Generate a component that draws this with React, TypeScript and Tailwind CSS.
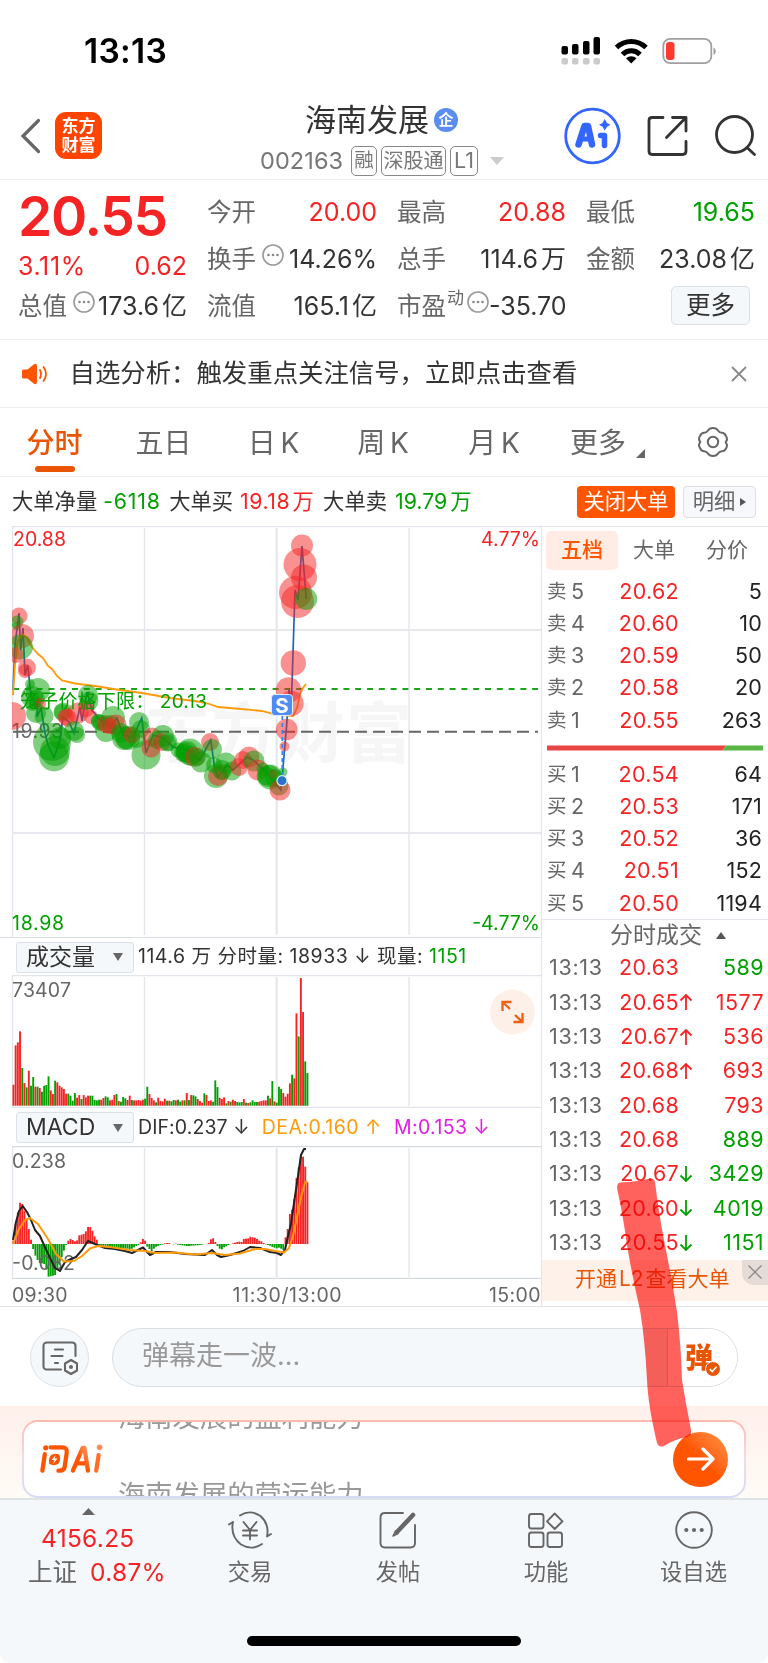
import type { ReactNode } from 'react'

const RED = '#f52323'
const GREEN = '#00a000'

const tabs = [
  { label: '五日', width: 'w-[109px]' },
  { label: '日 K', width: 'w-[111px]' },
  { label: '周 K', width: 'w-[108px]' },
  { label: '月 K', width: 'w-[114px]' },
]

const asks = [['卖', '5', '20.62', '5'], ['卖', '4', '20.60', '10'], ['卖', '3', '20.59', '50'], ['卖', '2', '20.58', '20'], ['卖', '1', '20.55', '263']]
const bids = [['买', '1', '20.54', '64'], ['买', '2', '20.53', '171'], ['买', '3', '20.52', '36'], ['买', '4', '20.51', '152'], ['买', '5', '20.50', '1194']]

const ticks = [
  { price: '20.63', dir: '', vol: '589', up: false },
  { price: '20.65', dir: '↑', vol: '1577', up: true },
  { price: '20.67', dir: '↑', vol: '536', up: true },
  { price: '20.68', dir: '↑', vol: '693', up: true },
  { price: '20.68', dir: '', vol: '793', up: true },
  { price: '20.68', dir: '', vol: '889', up: false },
  { price: '20.67', dir: '↓', vol: '3429', up: false },
  { price: '20.60', dir: '↓', vol: '4019', up: false },
  { price: '20.55', dir: '↓', vol: '1151', up: false },
]

// x, y, radius, side
const bubbles: [number, number, number, 'r' | 'g'][] = [
  [16, 626, 4, 'g'], [19, 616, 8.5, 'r'], [17, 622, 6.5, 'g'], [22, 636, 12, 'r'], [20.5, 647, 12.5, 'g'], [16, 655, 8, 'r'],
  [12, 716, 14, 'r'], [27, 667.5, 9, 'r'], [25, 671, 7, 'r'], [30, 684, 5, 'g'], [38, 690, 12, 'g'], [32, 697, 11, 'g'],
  [36, 699, 9, 'g'], [33, 703, 8, 'g'], [40, 704, 6, 'r'], [36, 713, 10, 'g'], [44, 716, 9.5, 'g'], [52, 742, 19, 'g'], [54, 756.5, 15, 'g'],
  [55, 751, 15, 'g'], [60, 738, 11, 'g'], [63, 712, 9.5, 'g'], [62, 712, 8, 'g'], [66, 717, 8.5, 'r'], [68, 718, 9, 'r'], [78, 713, 10.5, 'r'],
  [74, 731, 10, 'g'], [77, 735, 8, 'g'], [88, 695, 10, 'g'], [89, 701, 9.5, 'g'], [86, 709, 8, 'r'], [91, 717, 7, 'r'],
  [98, 721, 7, 'g'], [99, 722, 8, 'g'], [101, 723, 8, 'g'], [106, 731, 11, 'g'], [106, 724, 9, 'r'], [113, 718, 12, 'g'], [111, 724, 9, 'g'],
  [116, 725, 10.5, 'r'], [109, 726, 8, 'r'], [121, 733, 10, 'g'], [124, 738, 12, 'g'], [126, 738, 11, 'g'], [128, 738, 12, 'g'], [132, 735, 8.5, 'r'],
  [139, 722, 10, 'g'], [141, 729, 9, 'g'], [137, 739, 9, 'g'], [146, 755, 14.5, 'g'], [151, 748, 9.5, 'r'], [152, 737, 9.5, 'r'],
  [157, 740, 9, 'g'], [163, 736, 11, 'g'], [162, 742, 9, 'r'], [168, 742, 9.5, 'g'], [168, 743, 8, 'g'], [178, 750, 7.5, 'g'], [183, 753, 9, 'g'],
  [185, 752, 9.5, 'g'], [187, 752, 11, 'g'], [190, 752, 13.5, 'g'], [191, 756, 10, 'g'], [195, 757, 10, 'r'], [197, 757, 9, 'g'], [201, 762, 10.5, 'g'], [210, 742, 9, 'r'],
  [212, 749, 10, 'g'], [216, 776, 12, 'g'], [218, 776, 10, 'r'], [222, 772, 8, 'r'], [214, 765, 8, 'g'], [226, 763, 10.5, 'g'], [222, 770, 10, 'g'],
  [232, 771, 9.5, 'g'], [239, 767, 9, 'r'], [243, 760, 9, 'r'], [249, 757, 10.5, 'r'], [254, 761, 10.5, 'g'], [258, 770, 10.5, 'r'],
  [263, 769, 6.5, 'g'], [266, 776, 9.5, 'g'], [269, 776, 11, 'g'], [270, 777, 12.5, 'g'], [273, 774, 4.5, 'r'], [274, 778, 9, 'g'], [279, 786, 9.5, 'g'],
  [280, 790, 10.5, 'r'], [283, 772, 4.5, 'g'], [284.5, 746.5, 5, 'r'], [286.7, 729.5, 10.8, 'r'], [288.5, 690, 12.7, 'r'],
  [291, 703.5, 12.7, 'r'], [293.3, 663, 12.7, 'r'], [295.5, 592.5, 16.5, 'r'], [297.5, 601.5, 16.5, 'r'], [300, 564.5, 16.5, 'r'],
  [304, 577.5, 13, 'r'], [302, 545.5, 11, 'r'], [306.3, 599, 11, 'g'],
]

const pricePath =
  'M13 690L15 645L19 613L20.7 650L23 628L25 675L27.7 665L30.7 693L35 707L38 697L37 717L41 708L45 733L48 745L54 758L60 740L63 717L69 722L74 733L80 707L82 721L87 692L92 710L100 720L110 727L117 718L123 735L133 737L141.7 718L146 753L153 735L163 738L173 747L187 750L200 760L210.7 740L215 770L218 777L227 765L233 770L247 757L253 760L267 773L280.7 790L282 779L286.5 727L289 690L291.5 700L295 590L298 600L302 546L306.3 599'

const avgPath =
  'M13 695L15 665L17.500 642L22 634L27 638L32 647L38 654L43 658L48 666L52 669L57 676L62 680.500L75 683.500L95 686L120 690L142 693L170 698L195 701L208 703.500L218 707L235 708.500L262 711L272 713.500L282 715L293 716L297 708L300 694L303 688L306 684'

// side + height, one entry per minute
const volume =
  'r63 r181 r190 r223 g113 r68 g55 r105 g60 g86 r57 g57 r53 g42 g60 g62 g88 r46 r35 g75 r70 r60 r55 r50 r36 g36 g30 g15 g38 r24 r32 g20 r32 r25 r30 g30 g30 g17 g16 g18 r18 r23 g28 g25 r16 r18 r32 g35 r14 g12 g26 g22 r17 r30 g17 r16 r16 r17 r15 r18 g21 g57 r35 r23 r16 g10 r24 r14 r13 r21 g15 r15 g13 g17 r16 g18 g12 r16 g16 r38 g17 r32 g31 g28 r20 r14 r9 g37 r32 r14 r16 g12 g76 g56 r24 r20 r25 g7 r14 g12 r18 r14 g11 g10 g11 r20 g9 r8 g10 g16 g11 g11 r12 r14 r16 r16 g30 r22 g74 r13 g9 g57 g50 r38 r27 r36 r67 g93 r82 r277 g208 r383 r281 g133 g98'.split(' ')

const macd = [
  10, 60, 95, 124, 120, 100, 75, 45, 13, -15, -35, -48, -57, -58, -60, -75, -98, -97, -95, -93, -75, -62, -40, -20, -3,
  10, 15, 12, 8, 11, 26, 28, 30, 38, 51, 51, 40, 23, 13, -2, -4, -6, -5, -8, -10, -9, -10, -12, -12, -13, -12, -14, -14, -15, -14, -10, -6, -3,
  5, 15, 10, -8, -15, -22, -14, -8, -6, -3, -2, 2, 3, 3, 0, -1, 1, -2, -3, -4, -5, -6, -6, -5, -5, -4, -4, -3, -2, 0, 0, 3,
  14, 17, 6, -6, -14, -16, -10, -7, -3, 0, 2, 4, 6, 7, 6, 15, 16, 17, 22, 20, 19, 15, 10, 8, 3, -1, -3, -5, -9, -11, -13, -11, -14, -18,
  20, 45, 90, 103, 135, 198, 230, 262, 262, 232, 185,
]

const difPath =
  'M13 1240L16 1222L19 1211L22.700 1206L27 1212L31 1220L35 1230L40 1236L44 1245L50 1258L55 1268L60 1271L65 1262L71 1259L76 1257L82 1250L88 1241L95 1244L105 1248L115 1249L125 1251L132 1253L138 1250L143 1247.500L147 1252L150 1255L156 1252L170 1252L185 1254L205 1255L212 1250L217 1255L221 1257L230 1255L243 1251L250 1247L260 1248L270 1252L277 1253L281 1255L285 1250L288 1236L291 1224L294 1203L298 1176L301 1155L304 1149L306 1149'

const deaPath =
  'M13 1244L19 1229L25 1220L30 1218L38 1224L48 1239L56 1254L64 1261.500L74 1261L82 1256L90 1248.500L98 1246L110 1247L130 1250L145 1251L155 1253L175 1252.500L195 1254.500L212 1253L225 1255L240 1253.500L255 1249L265 1249L275 1251L284 1252.500L289 1248L293 1236L297 1217L301 1197L305 1183L307 1181'

function Dots({ className }: { className: string }) {
  return (
    <svg viewBox="0 0 22 22" className={`w-[22px] h-[22px] shrink-0 ${className}`}>
      <circle cx="11" cy="11" r="10" fill="none" stroke="#999" strokeWidth="1.600" />
      <circle cx="6.500" cy="11" r="1.300" fill="#888" />
      <circle cx="11" cy="11" r="1.300" fill="#888" />
      <circle cx="15.500" cy="11" r="1.300" fill="#888" />
    </svg>
  )
}

function Cell({ label, extra, value, color = 'text-[#333]' }: { label: string; extra?: ReactNode; value: string; color?: string }) {
  return (
    <div className="flex items-center h-[47px] whitespace-nowrap">
      <span className="text-[24.5px] text-[#666]">{label}</span>
      {extra}
      <span className={`ml-auto text-[25px] [word-spacing:-4px] ${color}`}>{value}</span>
    </div>
  )
}

function Grid({ top, bottom }: { top: number; bottom: number }) {
  return (
    <g stroke="#e2e5ec" strokeWidth="1.300">
      <path d={`M12.500 ${top}V${bottom}M144.500 ${top + 2}V${bottom - 2}M409 ${top + 2}V${bottom - 2}`} />
      <path d={`M276.700 ${top + 2}V${bottom - 2}`} strokeWidth="2" />
    </g>
  )
}

function StatusBar() {
  return (
    <div className="h-[94px] flex pl-[84px] relative">
      <span className="text-[33.5px] font-semibold tracking-[0.3px] leading-[102px] text-black">13:13</span>
      <svg viewBox="556 30 166 40" className="w-[166px] h-[40px] ml-auto mt-[30px] mr-[46px]">
        <g fill="#000">
          <rect x="561.500" y="46" width="6.500" height="8.500" rx="2" />
          <rect x="572" y="44" width="6.500" height="10.500" rx="2" />
          <rect x="583" y="41" width="6.500" height="13.500" rx="2" />
          <rect x="593.500" y="37" width="6.500" height="17.500" rx="2" />
        </g>
        <g fill="#cacaca">
          <rect x="561.500" y="58" width="6.500" height="6.500" rx="2" />
          <rect x="572" y="58" width="6.500" height="6.500" rx="2" />
          <rect x="583" y="58" width="6.500" height="6.500" rx="2" />
          <rect x="593.500" y="58" width="6.500" height="6.500" rx="2" />
        </g>
        <g fill="none" stroke="#000" strokeWidth="5">
          <path d="M616.500 47.500C625 39.500 637.500 39.500 646 47.500" />
          <path d="M622.500 54.500C627.500 49.500 635 49.500 640 54.500" />
        </g>
        <path d="M626 58.200C629 55.500 633.500 55.500 636.500 58.200L631.200 63.500Z" fill="#000" />
        <rect x="663.300" y="38.800" width="48" height="24.400" rx="7" fill="none" stroke="#a0a0a0" strokeWidth="1.800" />
        <path d="M713.500 47.500C716.500 49 716.500 53.500 713.500 55Z" fill="#a0a0a0" />
        <rect x="666" y="42" width="8.500" height="18" rx="3" fill="#ff3b30" />
      </svg>
    </div>
  )
}

function Header() {
  return (
    <div className="h-[86px] flex border-b border-[#eee]">
      <svg viewBox="0 0 24 40" className="w-[24px] h-[40px] ml-[19px] mt-[22px]">
        <path d="M19.500 4.500L4 20L19.500 35.500" fill="none" stroke="#666" strokeWidth="3.200" strokeLinecap="round" />
      </svg>
      <div className="w-[47px] h-[47px] ml-[12px] mt-[18px] rounded-[11px] bg-[#ff4400] text-white font-bold text-[17px] leading-[19px] text-center pt-[5px]">
        东方<br />财富
      </div>
      <div className="w-[250px] ml-[157px] flex flex-col">
        <div className="flex items-center h-[38px] mt-[7px] ml-[46px] text-[31px] text-[#333]">
          海南发展
          <span className="w-[24px] h-[24px] ml-[5px] rounded-full bg-[#5b8def] text-white text-[15px] font-bold flex items-center justify-center">企</span>
        </div>
        <div className="flex items-center h-[30px] mt-[7px] text-[23.5px] text-[#777] leading-none whitespace-nowrap">
          <span className="w-[92px] pl-[1px] tracking-[0.1px]">002163</span>
          <span className="w-[26px] h-[30px] border-[1.500px] border-[#888] rounded-[5px] text-[19.5px] flex items-center justify-center">融</span>
          <span className="w-[65px] h-[30px] ml-[4px] border-[1.500px] border-[#888] rounded-[5px] text-[20px] flex items-center justify-center">深股通</span>
          <span className="w-[28px] h-[30px] ml-[4px] border-[1.500px] border-[#888] rounded-[5px] text-[21.5px] flex items-center justify-center">L1</span>
          <svg viewBox="0 0 14 8" className="w-[14px] h-[8px] ml-[12px]"><path d="M0 0H14L7 8Z" fill="#ccc" /></svg>
        </div>
      </div>
      <svg viewBox="560 104 208 64" className="w-[208px] h-[64px] ml-auto mt-[10px]">
        <circle cx="592.500" cy="136" r="26.800" fill="none" stroke="#3366ff" strokeWidth="2.800" />
        <g stroke="#3366ff" strokeWidth="6.500" strokeLinecap="round" strokeLinejoin="round" fill="none">
          <path d="M578.500 144.500L584.500 126H588L592 144.500" />
          <path d="M582 139H590" strokeWidth="5" />
          <path d="M600.500 135.500H604.500V145.500" strokeWidth="5.500" />
        </g>
        <path d="M604.700 119L607 123L610.500 124.700L607 126.700L604.700 130.500L602.600 126.700L599 124.700L602.600 123Z" fill="#3366ff" />
        <g fill="none" stroke="#333" strokeWidth="2.800" strokeLinecap="round" strokeLinejoin="round">
          <path d="M663 117.500H652Q649 117.500 649 120.500V151Q649 154.500 652 154.500H682.500Q686 154.500 686 151V141.500" />
          <path d="M672.500 117.500H686V131M685.500 118L666.500 137.500" />
          <circle cx="734.500" cy="134.500" r="18" />
          <path d="M747 147.500L754.500 154.500" />
        </g>
      </svg>
    </div>
  )
}

function Quote() {
  return (
    <div className="h-[160px] border-b border-[#eee] pt-[9px] pl-[18px] flex gap-[20px]">
      <div className="w-[169px]">
        <div className="h-[54px] flex items-center text-[55px] font-semibold tracking-[-1.3px] text-[#f52323] leading-none">20.55</div>
        <div className="h-[40px] pt-[7px] flex items-center justify-between text-[25px] text-[#f52323]">
          <span className="tracking-[0.6px]">3.11%</span><span>0.62</span>
        </div>
        <Cell label="总值" extra={<Dots className="ml-[6px] -mt-[10px]" />} value="173.6 亿" />
      </div>
      <div className="w-[170px]">
        <Cell label="今开" value="20.00" color="text-[#f52323]" />
        <Cell label="换手" extra={<Dots className="ml-[6px] -mt-[10px]" />} value="14.26%" />
        <Cell label="流值" value="165.1 亿" />
      </div>
      <div className="w-[169px]">
        <Cell label="最高" value="20.88" color="text-[#f52323]" />
        <Cell label="总手" value="114.6 万" />
        <Cell label="市盈" extra={<><span className="text-[17px] text-[#666] -mt-[16px] ml-[1px]">动</span><Dots className="ml-[3px] -mt-[10px]" /></>} value="-35.70" />
      </div>
      <div className="w-[169px]">
        <Cell label="最低" value="19.65" color="text-[#00a000]" />
        <Cell label="金额" value="23.08 亿" />
        <div className="w-[79px] h-[39px] ml-[85px] mt-[3px] rounded-[5px] border border-[#dce1e6] bg-[#f5f8fa] text-[24.5px] text-[#333] flex items-center justify-center">更多</div>
      </div>
    </div>
  )
}

function Notice() {
  return (
    <div className="h-[68px] border-b border-[#eee] flex items-center">
      <svg viewBox="0 0 26 22" className="w-[26px] h-[22px] ml-[22px]">
        <path d="M1.500 6.500H5.500L12 1.200Q15 0 15 3V19Q15 22 12 20.800L5.500 15.500H1.500Q0 15.500 0 14V8Q0 6.500 1.500 6.500Z" fill="#ff5500" />
        <path d="M18 7Q20 11 18 15M21.500 4Q26.500 11 21.500 18" fill="none" stroke="#ff5500" strokeWidth="1.800" strokeLinecap="round" />
      </svg>
      <span className="ml-[21.5px] text-[25.4px] text-[#333] whitespace-nowrap">自选分析：触发重点关注信号，立即点击查看</span>
      <svg viewBox="0 0 16 16" className="w-[16px] h-[16px] ml-auto mr-[21px]">
        <path d="M1 1L15 15M15 1L1 15" stroke="#888" strokeWidth="1.800" />
      </svg>
    </div>
  )
}

function TabBar() {
  return (
    <div className="h-[69px] pt-[2px] border-b border-[#eee] flex items-center text-[28px] text-[#666] whitespace-nowrap [word-spacing:-3px]">
      <div className="w-[109px] flex justify-center text-[#ea5504] font-medium relative">
        分时
        <div className="absolute w-[40px] h-[6px] rounded-full bg-[#ea5504] left-[35px] top-[44px]" />
      </div>
      {tabs.map(t => <div key={t.label} className={`flex justify-center ${t.width}`}>{t.label}</div>)}
      <div className="ml-[19px]">更多</div>
      <svg viewBox="0 0 9 9" className="w-[9px] h-[9px] ml-[10px] mt-[20px]"><path d="M9 0V9H0Z" fill="#666" /></svg>
      <svg viewBox="0 0 32 32" className="w-[32px] h-[32px] ml-[52px] -mt-[2px]">
        <path d="M11 4.500Q12.500 2 16 2Q19.500 2 21 4.500Q22.500 6.800 25 6.800Q27.500 6.800 29 10Q31 13.500 29 15.500Q28.500 16 29 17Q31 19 29 22.500Q27.500 25.200 25 25.200Q22.500 25.200 21 27.500Q19.500 30 16 30Q12.500 30 11 27.500Q9.500 25.200 7 25.200Q4.500 25.200 3 22Q1 19 3 16.500Q3.500 16 3 15.500Q1 13 3 10Q4.500 6.800 7 6.800Q9.500 6.800 11 4.500Z" fill="none" stroke="#666" strokeWidth="2" />
        <circle cx="16" cy="16" r="5.200" fill="none" stroke="#666" strokeWidth="2" />
      </svg>
    </div>
  )
}

function BigOrders() {
  return (
    <div className="h-[49px] flex items-center pl-[12px] text-[21.3px] text-[#333] whitespace-nowrap">
      <span>大单净量</span>
      <span className="w-[64px] pl-[6px] tracking-[0.8px] text-[#00a000]">-6118</span>
      <span className="ml-[8px]">大单买</span>
      <span className="ml-[7px] w-[77px] tracking-[0.5px] [word-spacing:-4px] text-[#f52323]">19.18 万</span>
      <span className="ml-[6px]">大单卖</span>
      <span className="ml-[8px] [word-spacing:-3px] text-[#00a000]">19.79 万</span>
      <span className="ml-auto w-[98px] h-[32px] rounded-[4px] bg-[#ff5500] text-white flex items-center justify-center">关闭大单</span>
      <span className="ml-[8px] mr-[12px] w-[73px] h-[32px] rounded-[4px] border border-[#dcdfe6] bg-[#f7f8fb] text-[#666] flex items-center justify-center gap-[5px]">
        明细
        <svg viewBox="0 0 6 8" className="w-[6px] h-[8px]"><path d="M0 0L6 4L0 8Z" fill="#555" /></svg>
      </span>
    </div>
  )
}

function PriceChart() {
  return (
    <svg viewBox="0 526 541 411" className="w-[541px] h-[411px] block">
      <path d="M12 526.500H542" stroke="#e2e5ec" strokeWidth="1.300" />
      <Grid top={526} bottom={937} />
      <path d="M12 630H542M12 833H542" stroke="#e6e8ee" strokeWidth="1.800" />
      <text x="144" y="757" fontSize="66" fontWeight="700" fill="#f6f6f6" textLength="268">东方财富</text>
      <text x="13" y="546" fontSize="19.500" fill={RED} textLength="53">20.88</text>
      <text x="540" y="546" fontSize="19.500" fill={RED} textAnchor="end">4.77%</text>
      <text x="12" y="930" fontSize="19.500" fill={GREEN} textLength="52">18.98</text>
      <text x="540" y="930" fontSize="19.500" fill={GREEN} textAnchor="end">-4.77%</text>
      <text x="12" y="738" fontSize="19.500" fill="#666" textLength="51">19.93</text>
      <path d="M13 731.700H538" stroke="#666" strokeWidth="2" strokeDasharray="12 6" />
      <path d="M13 689H538" stroke="#1aa51a" strokeWidth="2" strokeDasharray="6 5.800" />
      <path d={pricePath} fill="none" stroke="#1668c0" strokeWidth="1.700" />
      <path d={avgPath} fill="none" stroke="#ff9a0a" strokeWidth="1.800" />
      <svg x="12" y="526" width="530" height="411" viewBox="12 526 530 411">
        {bubbles.map(([x, y, r, side], i) => (
          <circle key={i} cx={x} cy={y} r={r} fill={side === 'r' ? RED : GREEN} fillOpacity="0.5" />
        ))}
      </svg>
      <text x="20" y="708" fontSize="19" fill={GREEN} textLength="187">笼子价格下限： 20.13</text>
      <path d="M282.300 716V775" stroke="#3b86f5" strokeWidth="1.800" strokeDasharray="4 3" />
      <rect x="271.500" y="694.500" width="21" height="21" rx="3" fill="#4f8df5" stroke="#e6effc" />
      <text x="282" y="712.500" fontSize="20.500" fontWeight="700" fill="#fff" textAnchor="middle">S</text>
      <circle cx="282" cy="780.700" r="5" fill="#2a72cf" stroke="#dce8f8" strokeWidth="1.200" />
    </svg>
  )
}

function Dropdown({ label }: { label: string }) {
  return (
    <span className="w-[118px] h-[31px] ml-[16px] mr-[4px] shrink-0 rounded-[3px] border border-[#dce1e8] bg-[#f5f8fa] text-[23px] tracking-normal flex items-center justify-between pl-[9px] pr-[10px]">
      {label}
      <svg viewBox="0 0 10 8" className="w-[10px] h-[8px]"><path d="M0 0H10L5 8Z" fill="#666" /></svg>
    </span>
  )
}

function VolumeChart() {
  return (
    <svg viewBox="0 975 541 133" className="w-[541px] h-[133px] block">
      <Grid top={975} bottom={1108} />
      <path d="M12 975.500H542M12 1107.500H542" stroke="#e2e5ec" strokeWidth="1.300" />
      <text x="12" y="997" fontSize="19.500" fill="#666" textLength="59">73407</text>
      {volume.map((v, i) => {
        const h = Number(v.slice(1)) / 3
        return <rect key={i} x={12.5 + i * 2.194} y={1105.7 - h} width="1.900" height={h} fill={v[0] === 'r' ? RED : GREEN} />
      })}
      <circle cx="512.500" cy="1012" r="22.500" fill="#fdf0e8" />
      <path d="M510 1009L502.500 1002M502.500 1011V1002H511.500M515 1015L522.500 1022M522.500 1013V1022H513.500" fill="none" stroke="#f06010" strokeWidth="2.300" />
    </svg>
  )
}

function MacdChart() {
  return (
    <svg viewBox="0 1146 541 133" className="w-[541px] h-[133px] block">
      <Grid top={1146} bottom={1279} />
      <path d="M12 1146.500H542M12 1278.500H542" stroke="#d5d9e0" strokeWidth="1.500" />
      <text x="12" y="1168" fontSize="19.500" fill="#666" textLength="54">0.238</text>
      {macd.map((v, i) => (
        <rect key={i} x={12.5 + i * 2.194} y={v > 0 ? 1244 - v / 3 : 1244} width="1.900" height={Math.abs(v) / 3} fill={v > 0 ? RED : GREEN} />
      ))}
      <text x="12" y="1270" fontSize="19.500" fill="#666" textLength="63">-0.082</text>
      <path d={difPath} fill="none" stroke="#222" strokeWidth="2" strokeLinejoin="round" />
      <path d={deaPath} fill="none" stroke="#ff9a0a" strokeWidth="2" strokeLinejoin="round" />
    </svg>
  )
}

function Depth({ rows }: { rows: string[][] }) {
  return (
    <>
      {rows.map(([side, level, price, qty]) => (
        <div key={side + level} className="h-[32.2px] pt-[1px] flex items-center text-[21.5px] leading-none">
          <span className="w-[24px] pl-[5px] text-[19.5px] text-[#666]">{side}</span>
          <span className="w-[40px] pl-[5px] text-[#666]">{level}</span>
          <span className="w-[73px] text-right tracking-[0.3px] text-[#f52323]">{price}</span>
          <span className="ml-auto mr-[6px] tracking-[0.2px] text-[#222]">{qty}</span>
        </div>
      ))}
    </>
  )
}

function OrderBook() {
  return (
    <div className="w-[227px] h-[781px] border-l border-[#e2e5ec]">
      <div className="h-[49px] pt-[4px] pl-[4px] flex border-t border-[#e2e5ec] text-[21px] text-[#666]">
        <span className="w-[72px] h-[39px] pb-[1px] rounded-[5px] bg-[#ffede5] text-[#ff5500] font-medium flex items-center justify-center">五档</span>
        <span className="w-[72px] h-[39px] pb-[1px] flex items-center justify-center">大单</span>
        <span className="w-[74px] h-[39px] pb-[1px] flex items-center justify-center">分价</span>
      </div>
      <Depth rows={asks} />
      <svg viewBox="0 0 226 22" className="w-[226px] h-[22px] block">
        <path d="M5 9.500H184L180.500 14.500H5Z" fill="#e84545" />
        <path d="M184 9.500H221V14.500H180.500Z" fill="#5ab544" />
      </svg>
      <Depth rows={bids} />
      <div className="h-[32px] border-t border-[#e2e5ec] flex items-center pl-[68px] text-[23px] text-[#666]">
        分时成交
        <svg viewBox="0 0 10 7" className="w-[10px] h-[7px] ml-[14px]"><path d="M0 7H10L5 0Z" fill="#555" /></svg>
      </div>
      {ticks.map((t, i) => (
        <div key={i} className="h-[34.35px] flex items-center text-[21.5px] leading-none">
          <span className="w-[63px] pl-[7px] tracking-[0.7px] text-[#666]">13:13</span>
          <span className="w-[74px] text-right tracking-[0.3px] text-[#f52323]">{t.price}</span>
          <span className={`w-[15px] ${t.up ? 'text-[#f52323]' : 'text-[#00a000]'}`}>
            {t.dir && (
              <svg viewBox="0 0 14 18" className="w-[14px] h-[18px]">
                <path d={t.dir === '↑' ? 'M7 17V2M1.500 7.500L7 2L12.500 7.500' : 'M7 1V16M1.500 10.500L7 16L12.500 10.500'} fill="none" stroke="currentColor" strokeWidth="1.800" />
              </svg>
            )}
          </span>
          <span className={`ml-auto mr-[4px] tracking-[0.4px] ${t.up ? 'text-[#f52323]' : 'text-[#00a000]'}`}>{t.vol}</span>
        </div>
      ))}
      <div className="relative h-[41px] bg-[#fdf1ea] text-[21px] text-[#ea5504] flex items-center pl-[33px] pb-[3px] whitespace-nowrap [word-spacing:-4px]">
        开通 L2 查看大单
        <span className="absolute right-0 top-0 w-[26px] h-[25px] bg-[#e5dcd8] rounded-bl-[12px] flex items-center justify-center">
          <svg viewBox="0 0 14 14" className="w-[14px] h-[14px]"><path d="M0.500 0.500L13.500 13.500M13.500 0.500L0.500 13.500" stroke="#888" strokeWidth="1.300" /></svg>
        </span>
      </div>
    </div>
  )
}

function Charts() {
  return (
    <div className="flex border-b border-[#e0e3e8] h-[781px]">
      <div className="w-[541px] whitespace-nowrap text-[#333]">
        <PriceChart />
        <div className="h-[38px] pt-[1px] flex items-center border-t border-[#d8dce4] text-[19.5px] tracking-[0.5px]">
          <Dropdown label="成交量" />
          <span>114.6 万 分时量: 18933 ↓ 现量: <span className="text-[#00a000]">1151</span></span>
        </div>
        <VolumeChart />
        <div className="h-[38px] pt-[1px] flex items-center text-[19.5px]">
          <Dropdown label="MACD" />
          <span className="tracking-[0.1px]">DIF:0.237 ↓</span>
          <span className="ml-[12px] tracking-[0.5px] text-[#ff9a0a]">DEA:0.160 ↑</span>
          <span className="ml-[12px] tracking-[0.4px] text-[#e020e0]">M:0.153 ↓</span>
        </div>
        <MacdChart />
        <div className="h-[28px] flex items-center justify-between pl-[12px] text-[19.5px] text-[#666] pt-[5px]">
          <span className="tracking-[0.3px]">09:30</span>
          <span className="ml-[18px] tracking-[0.6px]">11:30/13:00</span>
          <span className="tracking-[0.4px]">15:00</span>
        </div>
      </div>
      <OrderBook />
    </div>
  )
}

function CommentBar() {
  return (
    <div className="h-[99px] flex items-start pt-[21px] pl-[30px]">
      <div className="w-[59px] h-[59px] rounded-full border border-[#dfe3e7] bg-[#f5f8fa] flex items-center justify-center">
        <svg viewBox="0 0 36 34" className="w-[36px] h-[34px]">
          <g fill="none" stroke="#666" strokeWidth="2.100" strokeLinecap="round" strokeLinejoin="round">
            <path d="M19 28.500H5Q1.500 28.500 1.500 25V5Q1.500 1.500 5 1.500H30Q33.500 1.500 33.500 5V15" />
            <path d="M13 8.500H21M9.500 15H20.500M13 22H16" />
            <path d="M29 19L35 22.500V29.500L29 33L23 29.500V22.500Z" />
          </g>
          <circle cx="29" cy="26" r="2" fill="#666" />
        </svg>
      </div>
      <div className="w-[626px] h-[59px] ml-[23px] rounded-full border border-[#d9dee3] bg-[#f5f8fa] overflow-hidden flex">
        <span className="flex-1 pl-[29px] pb-[3px] flex items-center text-[27px] text-[#999]">弹幕走一波...</span>
        <div className="w-[70px] border-l border-[#d9dee3] bg-white flex items-center pl-[17px] relative">
          <span className="text-[28px] font-black text-[#ea5504] leading-none">弹</span>
          <svg viewBox="0 0 16 16" className="absolute w-[16px] h-[16px] left-[37px] top-[32px]">
            <circle cx="8" cy="8" r="7.500" fill="#ea5504" stroke="#fff" />
            <path d="M4.800 8.200L7.200 10.500L11.500 5.800" fill="none" stroke="#fff" strokeWidth="1.600" />
          </svg>
        </div>
      </div>
    </div>
  )
}

function AskAi() {
  return (
    <div className="h-[92px] bg-linear-to-b from-[#fff0ec] to-[#fffbf6] px-[22px] pt-[14px]">
      <div className="h-[78px] rounded-[16px] p-[2px] bg-linear-to-b from-[#ffb9ad] via-[#f3dcea] to-[#d5daf5]">
        <div className="h-[74px] rounded-[14px] bg-white overflow-hidden flex items-center pl-[15px] pr-[16px]">
          <svg viewBox="0 0 66 32" className="w-[64px] h-[32px]">
            <defs>
              <linearGradient id="ask" x1="0" y1="1" x2="1" y2="0">
                <stop offset="0.500" stopColor="#ff5500" />
                <stop offset="1" stopColor="#ff9a6a" />
              </linearGradient>
            </defs>
            <g fill="none" stroke="#ff5500" strokeWidth="4.400" strokeLinecap="round" strokeLinejoin="round">
              <path d="M6 11L3.500 28" />
              <path d="M12 4H24Q29.500 4 28.500 10L26.500 24Q26 28.500 20 28" />
              <path d="M35 28L45 4.500H47L50.500 28M39 20.500H49" stroke="url(#ask)" />
              <path d="M61.500 12L59 28" stroke="#ff6f2a" />
            </g>
            <circle cx="7" cy="4.500" r="2.700" fill="#ff5500" />
            <circle cx="62.500" cy="4" r="2.900" fill="#ff8a5a" />
            <path d="M12.500 12Q17 9.500 21 11.500Q23 16 20 21Q15 24 10.500 21Q9.500 15 12.500 12Z" fill="#ff5500" />
            <path d="M17.500 11.500L13 17H16L14.500 21.500L19 15.500H16Z" fill="#fff" />
          </svg>
          <div className="ml-[15px] text-[27.3px] leading-[78px] text-[#999]">
            <div className="-mt-[4px]">海南发展的盈利能力</div>
            <div>海南发展的营运能力</div>
          </div>
          <div className="ml-auto w-[55px] h-[55px] rounded-full bg-linear-to-tr from-[#ff5500] from-50% to-[#ff9540] flex items-center justify-center">
            <svg viewBox="0 0 28 24" className="w-[28px] h-[24px]">
              <path d="M1.500 12H26M16 2L26 12L16 22" fill="none" stroke="#fff" strokeWidth="3.200" strokeLinecap="round" strokeLinejoin="round" />
            </svg>
          </div>
        </div>
      </div>
    </div>
  )
}

function NavItem({ label, width, children }: { label: string; width: string; children: ReactNode }) {
  return (
    <div className={`flex flex-col items-center text-[22.3px] text-[#666] ${width}`}>
      <svg viewBox="0 0 44 40" className="w-[44px] h-[40px] mt-[10px] mb-[6px]" fill="none" stroke="#666" strokeWidth="1.900" strokeLinecap="round" strokeLinejoin="round">
        {children}
      </svg>
      <span className="leading-[32px]">{label}</span>
    </div>
  )
}

function BottomNav() {
  return (
    <div className="h-[165px] bg-[#f5f8fa] border-t-2 border-[#dfe3e6] rounded-b-[10px] flex flex-col">
      <div className="flex">
        <div className="w-[176px] pl-[28px] flex flex-col text-[#f52323] whitespace-nowrap">
          <svg viewBox="0 0 13 7" className="w-[13px] h-[7px] ml-[54px] mt-[8px]"><path d="M0 7H13L6.500 0Z" fill="#666" /></svg>
          <span className="ml-[13px] mt-[7px] leading-[32px] text-[24.5px] tracking-[0.3px]">4156.25</span>
          <span className="mt-[2px] leading-[32px] text-[24.5px] tracking-[0.3px]"><span className="text-[#666] tracking-normal mr-[13px]">上证</span>0.87%</span>
        </div>
        <NavItem label="交易" width="w-[148px]">
          <path d="M12 5.500Q22 -1 32.500 6Q41.500 14 39 26.500L43 24M34 34Q24 41 13 34.500Q2 26 5 12L1 14.500" />
          <path d="M15.500 12L22 20L28.500 12M22 20V29.500M15 20.500H29M15 25.500H29" />
        </NavItem>
        <NavItem label="发帖" width="w-[148px]">
          <path d="M27 3H9Q4.500 3 4.500 7.500V33Q4.500 37.500 9 37.500H34.500Q39 37.500 39 33V15" />
          <path d="M37 5L21 22" strokeWidth="4.500" />
          <path d="M19.500 21L17 26L22 23.500" strokeWidth="1.500" />
        </NavItem>
        <NavItem label="功能" width="w-[148px]">
          <rect x="5" y="4" width="14.500" height="14.500" rx="2.500" />
          <rect x="5" y="22.500" width="14.500" height="14.500" rx="2.500" />
          <rect x="23.500" y="22.500" width="14.500" height="14.500" rx="2.500" />
          <path d="M30.700 3.500L38.500 11.300L30.700 19L23 11.300Z" />
        </NavItem>
        <NavItem label="设自选" width="w-[147px]">
          <circle cx="22" cy="20" r="17.800" />
          <g fill="#666" stroke="none"><circle cx="14.300" cy="20" r="2.100" /><circle cx="22" cy="20" r="2.100" /><circle cx="29.700" cy="20" r="2.100" /></g>
        </NavItem>
      </div>
      <div className="w-[274px] h-[10px] rounded-full bg-black mx-auto mt-auto mb-[17px]" />
    </div>
  )
}

export default function App() {
  return (
    <div className="relative w-[768px] h-[1663px] overflow-hidden bg-white font-['Inter','Noto_Sans_CJK_SC',sans-serif]">
      <StatusBar />
      <Header />
      <Quote />
      <Notice />
      <TabBar />
      <BigOrders />
      <Charts />
      <CommentBar />
      <AskAi />
      <BottomNav />
      {/* hand-drawn marker over the order list */}
      <svg viewBox="610 1170 90 285" className="absolute left-[610px] top-[1170px] w-[90px] h-[285px] mix-blend-multiply">
        <path d="M620 1182.500Q636 1182 650 1178.500Q654 1178 655 1182Q659 1215 664 1240Q672 1280 677 1312Q681 1345 682 1380Q686 1405 691 1430Q692 1436 687 1437Q675 1439 664 1446Q659 1448 657 1443Q648 1405 647 1380Q645 1340 640 1310Q632 1275 627 1245Q623 1215 617 1188Q617 1183 620 1182.500Z" fill="#ff625c" />
      </svg>
    </div>
  )
}
